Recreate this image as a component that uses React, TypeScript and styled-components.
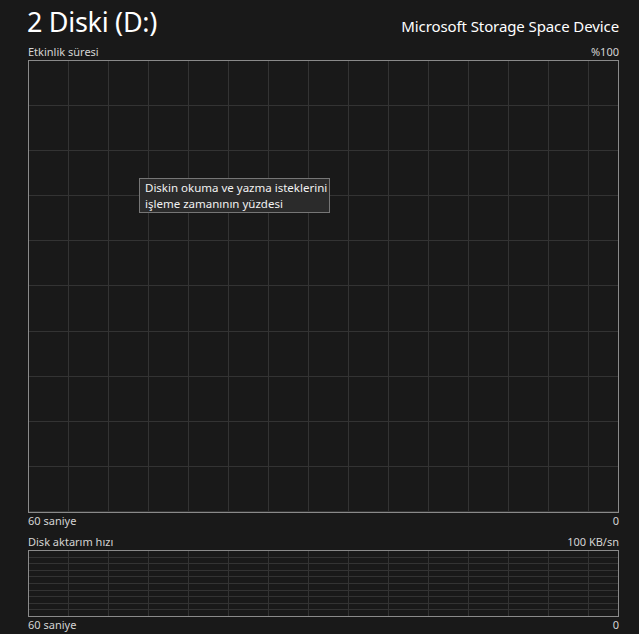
import React from 'react'
import styled, { createGlobalStyle } from 'styled-components'

const GlobalStyle = createGlobalStyle`
  html, body {
    margin: 0;
    padding: 0;
    background: #191919;
  }
  body {
    font-family: 'Noto Sans', 'Open Sans', sans-serif;
    color: #d6d6d6;
  }
`

const colors = {
  bg: '#191919',
  grid: '#333333',
  border: '#8a8a8a',
  text: '#d4d4d4',
  title: '#ffffff',
}

const Page = styled.div`
  width: 639px;
  height: 634px;
  box-sizing: border-box;
  padding: 0 20px 0 28px;
  display: flex;
  flex-direction: column;
  background: ${colors.bg};
  overflow: hidden;
`

const Header = styled.div`
  height: 44px;
  box-sizing: border-box;
  padding-top: 2px;
  display: flex;
  justify-content: space-between;
  align-items: baseline;
`

const Title = styled.h1`
  margin: 0 0 0 -1px;
  font-size: 27px;
  font-weight: 400;
  line-height: 40px;
  color: ${colors.title};
  letter-spacing: -0.3px;
`

const Device = styled.div`
  font-size: 15px;
  font-weight: 400;
  color: ${colors.title};
  letter-spacing: -0.1px;
`

const LabelRow = styled.div<{ $gapTop?: number }>`
  display: flex;
  justify-content: space-between;
  align-items: flex-end;
  height: 16px;
  margin-top: ${p => p.$gapTop ?? 0}px;
  font-size: 11px;
  line-height: 16px;
  color: ${colors.text};
`

const Chart = styled.div<{ $height: number; $row: number }>`
  position: relative;
  box-sizing: border-box;
  height: ${p => p.$height}px;
  border: 1px solid ${colors.border};
  background-color: ${colors.bg};
  background-image:
    repeating-linear-gradient(to right, transparent 0 39px, ${colors.grid} 39px 40px),
    repeating-linear-gradient(to bottom, transparent 0 ${p => p.$row - 1}px, ${colors.grid} ${p => p.$row - 1}px ${p => p.$row}px);
`

const Tooltip = styled.div`
  position: absolute;
  left: 110px;
  top: 117px;
  box-sizing: border-box;
  width: 191px;
  height: 35px;
  padding: 1px 5px;
  background: #2b2b2b;
  border: 1px solid #767676;
  color: #f2f2f2;
  font-size: 11.5px;
  line-height: 15.5px;
  white-space: nowrap;
`

export default function App() {
  return (
    <>
      <GlobalStyle />
      <Page>
        <Header>
          <Title>2 Diski (D:)</Title>
          <Device>Microsoft Storage Space Device</Device>
        </Header>
        <LabelRow>
          <span>Etkinlik süresi</span>
          <span>%100</span>
        </LabelRow>
        <Chart $height={453} $row={45.1}>
          <Tooltip>
            Diskin okuma ve yazma isteklerini
            <br />
            işleme zamanının yüzdesi
          </Tooltip>
        </Chart>
        <LabelRow>
          <span>60 saniye</span>
          <span>0</span>
        </LabelRow>
        <LabelRow $gapTop={5}>
          <span>Disk aktarım hızı</span>
          <span>100 KB/sn</span>
        </LabelRow>
        <Chart $height={67} $row={6.6} />
        <LabelRow>
          <span>60 saniye</span>
          <span>0</span>
        </LabelRow>
      </Page>
    </>
  )
}
